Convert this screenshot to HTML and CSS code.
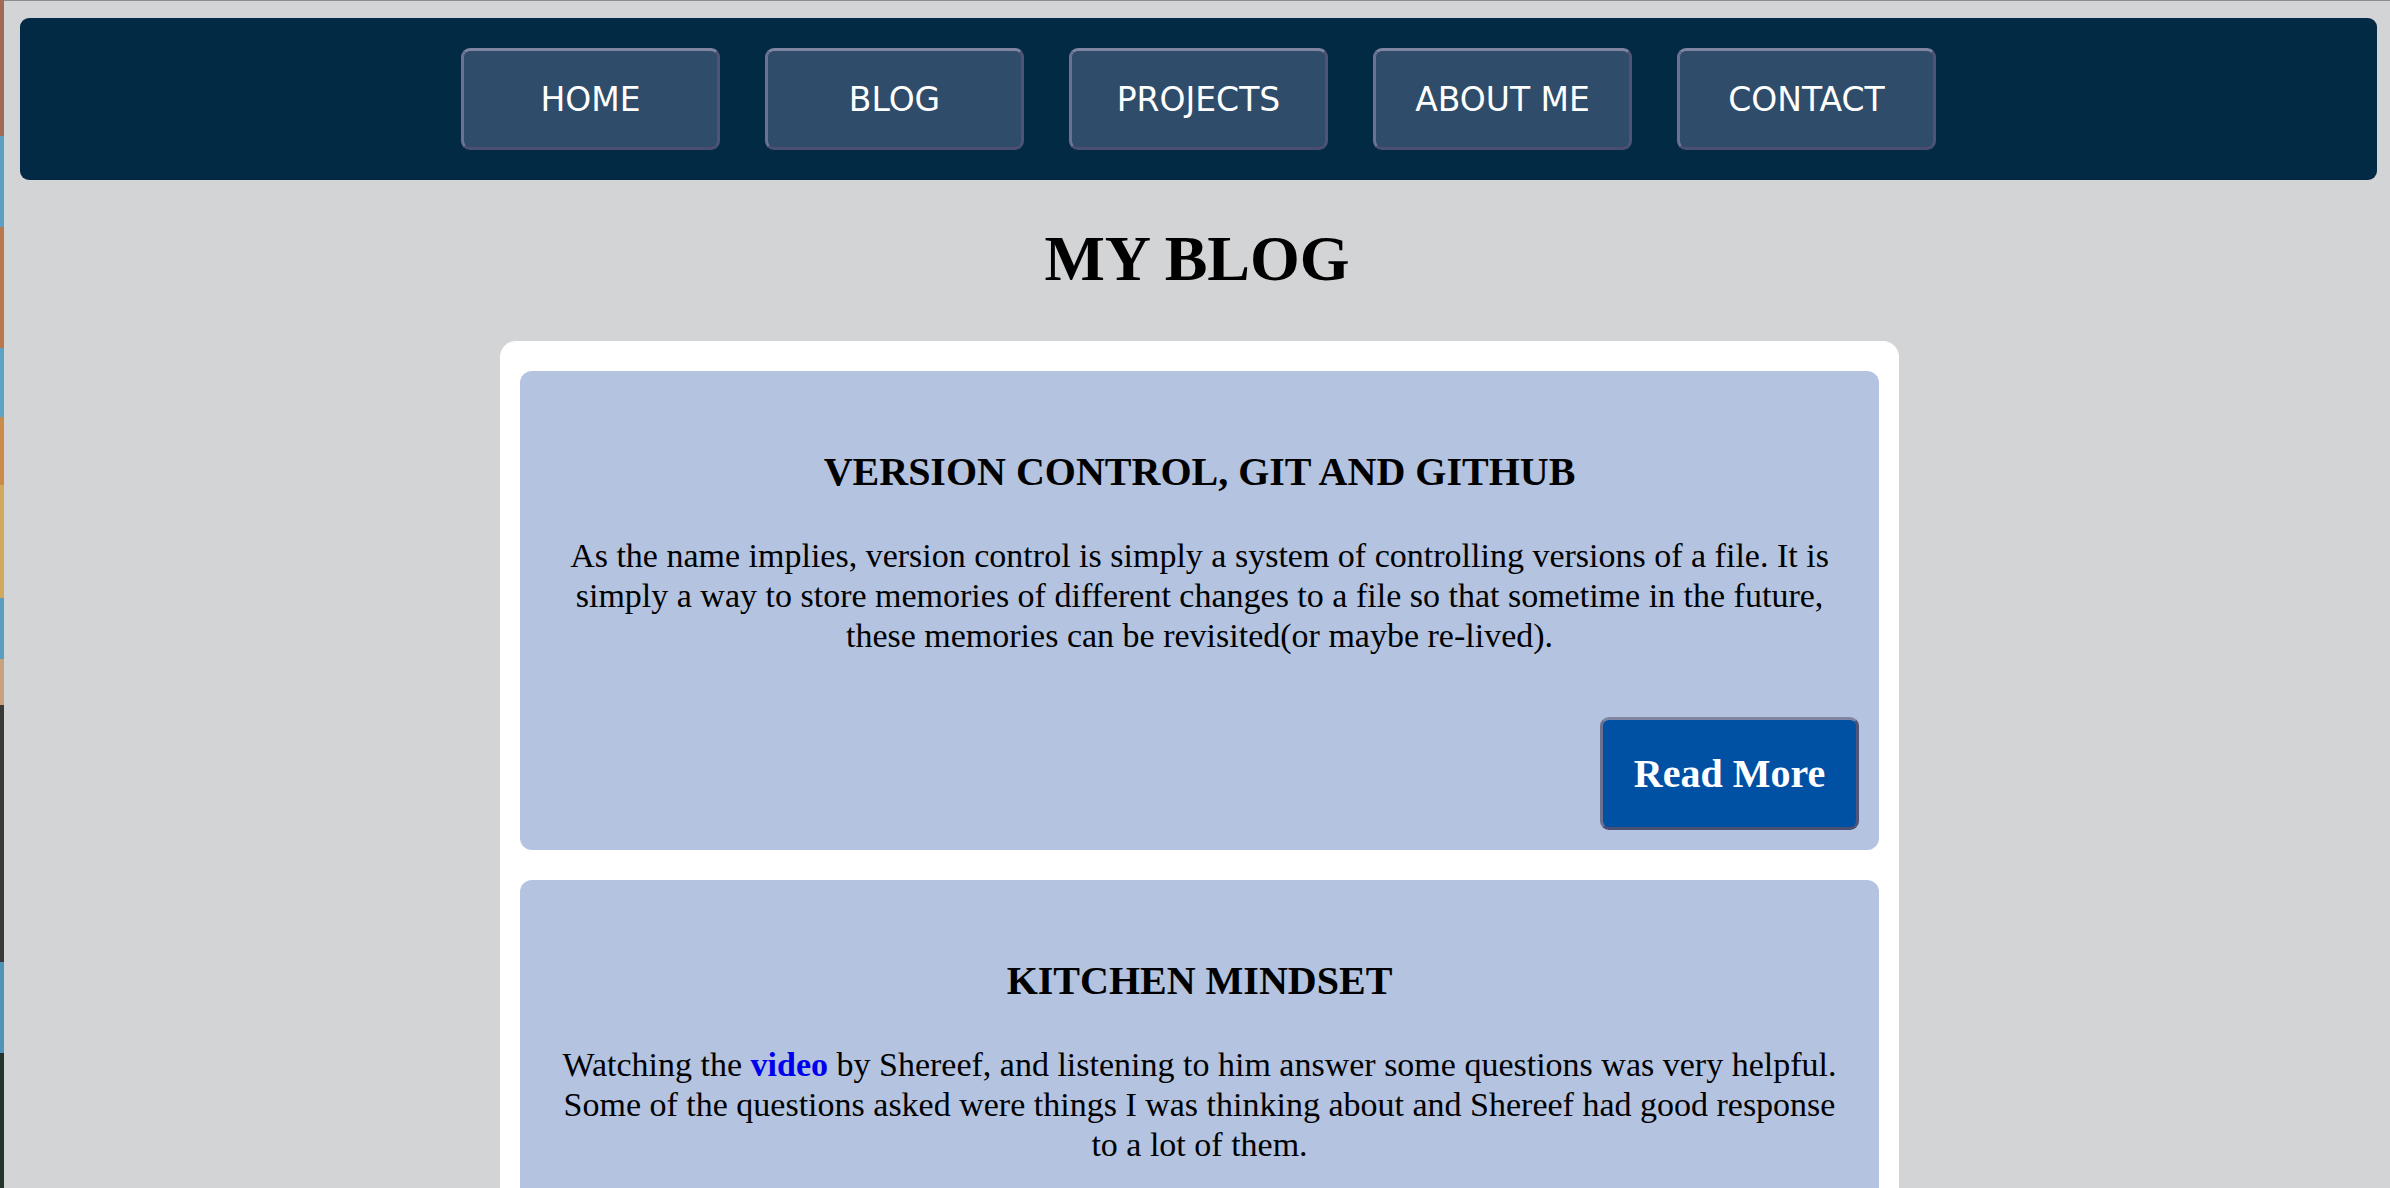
FILE: index.html
```html
<!DOCTYPE html>
<html lang="en">
<head>
<meta charset="utf-8">
<title>My Blog</title>
<link rel="stylesheet" href="styles.css">
</head>
<body>
<div class="screen">
  <div class="wallpaper"></div>
  <div class="page">
    <nav class="topnav">
      <a class="navbtn" href="#">HOME</a>
      <a class="navbtn" href="#">BLOG</a>
      <a class="navbtn" href="#">PROJECTS</a>
      <a class="navbtn" href="#">ABOUT ME</a>
      <a class="navbtn" href="#">CONTACT</a>
    </nav>
    <h1 class="page-title">MY BLOG</h1>
    <main class="posts">
      <article class="post">
        <h2 class="post-title">VERSION CONTROL, GIT AND GITHUB</h2>
        <p class="post-text">As the name implies, version control is simply a system of controlling versions of a file. It is simply a way to store memories of different changes to a file so that sometime in the future, these memories can be revisited(or maybe re-lived).</p>
        <div class="post-actions"><a class="readmore" href="#">Read More</a></div>
      </article>
      <article class="post">
        <h2 class="post-title">KITCHEN MINDSET</h2>
        <p class="post-text">Watching the <a class="inline-link" href="#">video</a> by Shereef, and listening to him answer some questions was very helpful. Some of the questions asked were things I was thinking about and Shereef had good response to a lot of them.</p>
        <div class="post-actions"><a class="readmore" href="#">Read More</a></div>
      </article>
    </main>
  </div>
</div>
</body>
</html>
```

FILE: styles.css
```css
html, body {
  margin: 0;
  padding: 0;
  background: #d3d4d6;
}

.screen {
  display: flex;
  min-height: 1188px;
}

.wallpaper {
  flex: 0 0 4px;
  background: linear-gradient(to bottom,
    #a26a52 0px, #a26a52 136px,
    #5c9ec4 136px, #5c9ec4 227px,
    #b9784c 227px, #b9784c 348px,
    #5aa2c6 348px, #5aa2c6 417px,
    #c98a4a 417px, #c98a4a 485px,
    #d2a85e 485px, #d2a85e 598px,
    #5a9cc2 598px, #5a9cc2 659px,
    #c7a27c 659px, #c7a27c 705px,
    #3a3a36 705px, #3a3a36 962px,
    #4f94b8 962px, #4f94b8 1053px,
    #23342c 1053px, #23342c 1188px);
}

.page {
  flex: 1;
  min-width: 0;
  border-top: 1px solid #8c8c8c;
  background: #d3d4d6;
  font-family: "Liberation Serif", "Times New Roman", serif;
  color: #000;
}

.topnav {
  margin: 17px 13px 0 16px;
  height: 162px;
  background: #032a45;
  border-radius: 9px;
  display: flex;
  justify-content: center;
  align-items: center;
  gap: 45px;
}

.navbtn {
  box-sizing: border-box;
  width: 259px;
  height: 102px;
  display: flex;
  align-items: center;
  justify-content: center;
  background: #2f4d6a;
  border: 3px solid;
  border-color: #7f84a0 #4e5377 #4a4e72 #6c7192;
  border-radius: 9px;
  color: #fff;
  text-decoration: none;
  font-family: "DejaVu Sans", Verdana, sans-serif;
  font-size: 33px;
}

.page-title {
  margin: 42px 0 45px;
  text-align: center;
  font-size: 64px;
  line-height: 74px;
  font-weight: bold;
}

.posts {
  box-sizing: border-box;
  width: 1399px;
  margin: 0 0 0 calc(50% - 697px);
  padding: 30px 20px;
  background: #fff;
  border-radius: 16px;
  display: flex;
  flex-direction: column;
  gap: 30px;
}

.post {
  background: #b3c3e0;
  border-radius: 12px;
  padding: 40px 20px 20px;
  text-align: center;
}

.post-title {
  margin: 38px 0 41px;
  font-size: 40px;
  line-height: 46px;
  font-weight: bold;
}

.post-text {
  margin: 0;
  padding: 0 16px;
  font-size: 34px;
  line-height: 40px;
}

.inline-link {
  color: #0000ee;
  font-weight: bold;
  text-decoration: none;
}

.post-actions {
  margin-top: 61px;
  display: flex;
  justify-content: flex-end;
}

.readmore {
  box-sizing: border-box;
  width: 259px;
  height: 113px;
  display: flex;
  align-items: center;
  justify-content: center;
  background: #0050a4;
  border: 3px solid;
  border-color: #7f84a0 #4e5377 #4a4e72 #6c7192;
  border-radius: 9px;
  color: #fff;
  text-decoration: none;
  font-size: 40px;
  font-weight: bold;
}
```
